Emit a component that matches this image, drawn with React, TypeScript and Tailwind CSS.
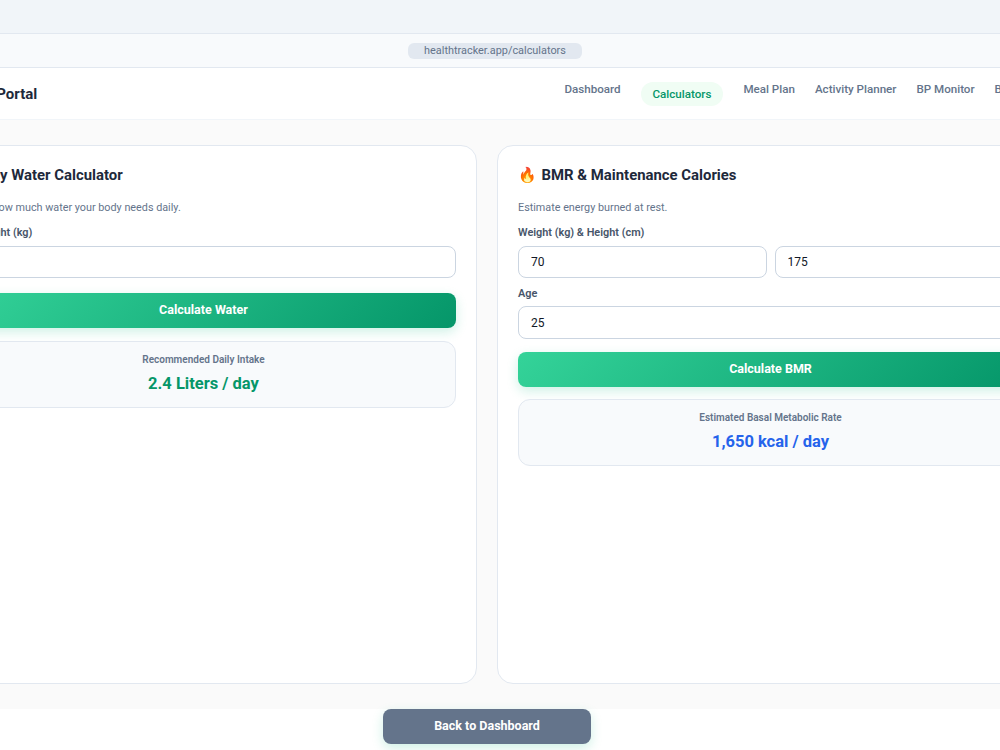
import React from "react";

const inputCls = "w-full min-w-0 h-8 rounded-lg border border-[#cbd5e1] bg-white px-3 text-[12px] text-[#111827] outline-none";
const labelCls = "block text-[10.9px] font-semibold leading-[13px] text-[#475569]";
const btnCls = "block w-full h-[35px] rounded-lg bg-[linear-gradient(135deg,#34d399,#059669)] pb-px text-center text-[12.5px] font-bold text-white shadow-[0_4px_12px_rgba(16,185,129,0.2)]";

function Nav({ children, active }: { children: React.ReactNode; active?: boolean }) {
  return active ? (
    <span className="rounded-full bg-[#f0fdf4] px-3 py-[5px] text-[11.6px] font-medium leading-[14px] text-[#059669] whitespace-nowrap">{children}</span>
  ) : (
    <span className="text-[11.6px] font-medium leading-[14px] text-[#64748b] whitespace-nowrap">{children}</span>
  );
}

function Result({ label, value, color, top }: { label: string; value: string; color: string; top: string }) {
  return (
    <div className={`${top} flex h-[67px] flex-col items-center rounded-xl border border-[#e2e8f0] bg-[#f8fafc] pt-[12px]`}>
      <div className="text-[10px] font-semibold leading-[12px] text-[#64748b]">{label}</div>
      <div className={`mt-[6px] text-[16.5px] font-bold leading-[24px] ${color}`}>{value}</div>
    </div>
  );
}

function Title({ icon, text }: { icon: string; text: string }) {
  return (
    <h2 className="text-[14.9px] font-bold leading-[18px] text-[#1e293b]">
      <span className="mr-[5px]">{icon}</span>
      {text}
    </h2>
  );
}

export default function App() {
  return (
    <div className="h-[750px] w-[1000px] overflow-hidden bg-white">
      <div className="ml-[-94px] flex h-[750px] w-[1162px] flex-col font-['Roboto','Noto_Color_Emoji',sans-serif]">
        <div className="h-[34px] shrink-0 border-b border-[#e2e8f0] bg-[#f1f5f9]" />
        <div className="flex h-[34px] shrink-0 items-center justify-center border-b border-[#e2e8f0] bg-[#f8fafc] pl-4">
          <div className="rounded-md bg-[#e2e8f0] px-4 text-[10.9px] leading-[16px] text-[#64748b]">healthtracker.app/calculators</div>
        </div>
        <header className="flex h-[52px] shrink-0 items-start justify-between border-b border-[#f1f5f9] bg-white pl-5 pr-[11px] pt-[14px]">
          <div className="pt-[3px] text-[15px] font-bold leading-[18px] text-[#1e293b]">🩺 Health Portal</div>
          <nav className="flex items-start gap-5">
            <Nav>Dashboard</Nav>
            <Nav active>Calculators</Nav>
            <Nav>Meal Plan</Nav>
            <Nav>Activity Planner</Nav>
            <Nav>BP Monitor</Nav>
            <Nav>BMI Tracker</Nav>
          </nav>
        </header>
        <main className="grid h-[589px] shrink-0 grid-cols-2 gap-5 bg-[#fafafa] px-6 py-[25px]">
          <section className="rounded-2xl border border-[#e2e8f0] bg-white p-5">
            <Title icon="💧" text="Daily Water Calculator" />
            <p className="mt-[17px] text-[10.8px] leading-[13px] text-[#64748b]">Find out how much water your body needs daily.</p>
            <label className={`${labelCls} mt-[12px]`}>Your Weight (kg)</label>
            <input className={`${inputCls} mt-[7px]`} defaultValue="" />
            <div className="mt-[15px]"><button className={btnCls}>Calculate Water</button></div>
            <Result top="mt-[13px]" label="Recommended Daily Intake" value="2.4 Liters / day" color="text-[#059669]" />
          </section>
          <section className="rounded-2xl border border-[#e2e8f0] bg-white p-5">
            <Title icon="🔥" text="BMR & Maintenance Calories" />
            <p className="mt-[17px] text-[10.8px] leading-[13px] text-[#64748b]">Estimate energy burned at rest.</p>
            <label className={`${labelCls} mt-[12px]`}>Weight (kg) &amp; Height (cm)</label>
            <div className="mt-[7px] grid grid-cols-2 gap-2">
              <input className={inputCls} defaultValue="70" />
              <input className={inputCls} defaultValue="175" />
            </div>
            <label className={`${labelCls} mt-[9px]`}>Age</label>
            <input className={`${inputCls} mt-[6px] h-[33px]`} defaultValue="25" />
            <div className="mt-[13px]"><button className={btnCls}>Calculate BMR</button></div>
            <Result top="mt-[12px]" label="Estimated Basal Metabolic Rate" value="1,650 kcal / day" color="text-[#2563eb]" />
          </section>
        </main>
        <div className="flex justify-center">
          <button className="h-[35px] w-[208px] rounded-lg bg-[#64748b] pb-px text-[12.5px] font-bold text-white shadow-[0_4px_12px_rgba(16,185,129,0.2)]">Back to Dashboard</button>
        </div>
      </div>
    </div>
  );
}
